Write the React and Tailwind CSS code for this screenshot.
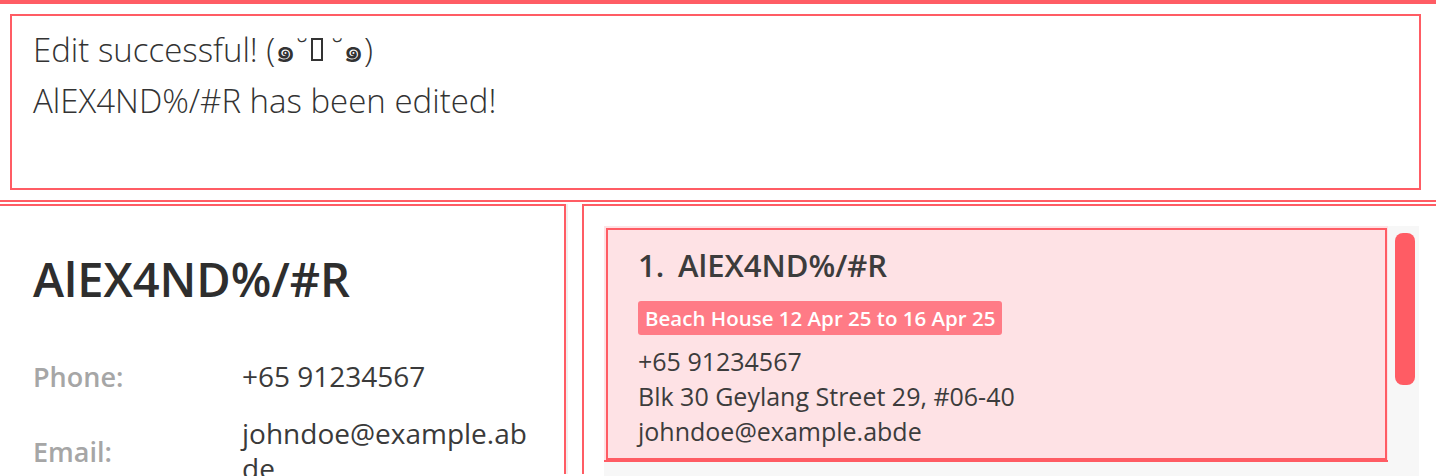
import React from "react";

const RED = "border-[#ff5c64]";

export default function App() {
  return (
    <div className="w-[1436px] h-[476px] overflow-hidden bg-white text-[#333333]" style={{ fontFamily: '"Open Sans", "Noto Sans", sans-serif' }}>
      <div className="h-[4px] bg-[#ff5c64]" />
      <div className="pl-[10px] pr-[15px] pt-[10px]">
        <div className={`h-[176px] border-2 ${RED} pl-[21px] pt-[8px] font-light text-[33px] leading-[51px] text-[#333]`}>
          <div className="flex items-center whitespace-pre">
            <span>Edit successful! (๑˘</span>
            <span className="inline-block w-[12px] h-[23px] border-[2.5px] border-[#333] ml-[3px]" />
            <span> ˘๑)</span>
          </div>
          <div>AlEX4ND%/#R has been edited!</div>
        </div>
      </div>
      <div className={`mt-[10px] border-t-2 ${RED}`} />
      <div className="mt-[2px] flex h-[270px]">
        <div className={`w-[566px] border-t-2 border-r-2 ${RED} pl-[33px] pt-[43px]`}>
          <div className="text-[47px] font-semibold leading-[60px] text-[#2e2e2e]">AlEX4ND%/#R</div>
          <div className="mt-[50px] grid grid-cols-[209px_1fr] gap-y-[22px] pr-[24px] text-[28px] leading-[35px]">
            <div className="font-semibold text-[#a6a6a6] self-center text-[27px]">Phone:</div>
            <div className="text-[#3a3a3a]">+65 91234567</div>
            <div className="font-semibold text-[#a6a6a6] self-center text-[27px]">Email:</div>
            <div className="text-[#3a3a3a] break-all">johndoe@example.abde</div>
          </div>
        </div>
        <div className="w-[16px] flex">
          <div className="w-[2px] bg-[#f0f0f0]" />
        </div>
        <div className={`flex-1 border-t-2 border-l-2 ${RED} pl-[20px] pt-[20px] pr-[17px]`}>
          <div className="flex bg-[#f7f7f7] h-[260px]">
            <div className="w-[784px] self-start">
              <div className="bg-[#fee2e5] pl-[2px] pt-[2px] pr-[1px] border-b-2 border-[#ff5c64]">
                <div className={`border-2 ${RED} h-[232px] pl-[30px] pt-[13px]`}>
                  <div className="flex text-[31px] leading-[44px] font-semibold text-[#3c3c3c]">
                    <span className="w-[40px]">1.</span>
                    <span>AlEX4ND%/#R</span>
                  </div>
                  <div className="mt-[14px] inline-block bg-[#ff7b86] rounded-[3px] px-[7px] text-white text-[20.5px] leading-[34px] font-semibold">
                    Beach House 12 Apr 25 to 16 Apr 25
                  </div>
                  <div className="mt-[9px] text-[25px] leading-[35px] text-[#3c3c3c]">
                    <div>+65 91234567</div>
                    <div>Blk 30 Geylang Street 29, #06-40</div>
                    <div>johndoe@example.abde</div>
                  </div>
                </div>
              </div>
            </div>
            <div className="flex-1 pl-[7px] pt-[7px]">
              <div className="w-[20px] h-[152px] rounded-[8px] bg-[#ff5c64]" />
            </div>
          </div>
        </div>
      </div>
    </div>
  );
}
